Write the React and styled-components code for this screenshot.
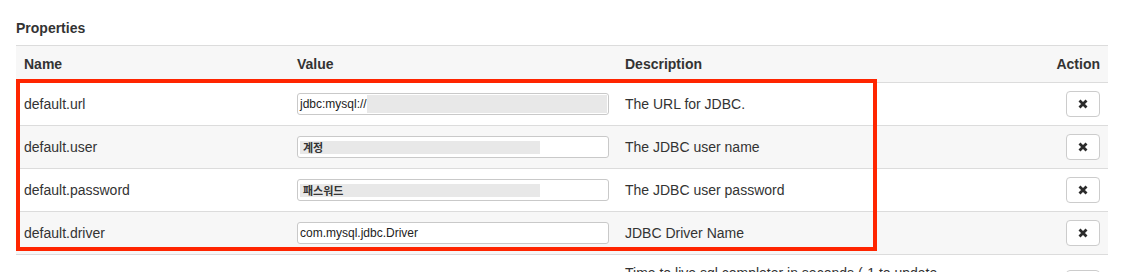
import React from 'react'
import styled, { createGlobalStyle } from 'styled-components'

const GlobalStyle = createGlobalStyle`
  html, body {
    margin: 0;
    padding: 0;
    background: #fff;
  }
  body {
    font-family: 'Liberation Sans', Arial, Helvetica, sans-serif;
    font-size: 14px;
    line-height: 20px;
    color: #333;
  }
`

const Page = styled.div`
  padding: 18px 16px 0;
  height: 272px;
  box-sizing: border-box;
  overflow: hidden;
`

const Title = styled.h4`
  margin: 0 0 7px;
  font-size: 14px;
  line-height: 20px;
  font-weight: bold;
`

const TableWrap = styled.div`
  position: relative;
`

const Table = styled.table`
  width: 100%;
  table-layout: fixed;
  border-collapse: collapse;
  border-spacing: 0;
`

const HeadCell = styled.th`
  padding: 8px;
  line-height: 20px;
  font-weight: bold;
  text-align: ${(p) => (p.$right ? 'right' : 'left')};
  background: #f7f7f7;
  border-top: 1px solid #dcdcdc;
`

const Row = styled.tr`
  background: ${(p) => (p.$striped ? '#f7f7f7' : '#fff')};
`

const Cell = styled.td`
  padding: 8px;
  line-height: 20px;
  vertical-align: middle;
  border-top: 1px solid #dcdcdc;
  text-align: ${(p) => (p.$right ? 'right' : 'left')};
`

const Field = styled.div`
  display: flex;
  align-items: center;
  height: 22px;
  box-sizing: border-box;
  border: 1px solid #c9c9c9;
  border-radius: 3px;
  background: #fff;
  padding: 0 1px 0 2px;
  font-size: 12px;
  line-height: 18px;
  color: #222;
  white-space: nowrap;
  overflow: hidden;
`

const Blur = styled.span`
  flex: 1;
  align-self: stretch;
  margin: 1px 0;
  background: #e8e8e8;
`

const Masked = styled.span`
  display: inline-block;
  width: 240px;
  height: 13px;
  padding-left: 3px;
  box-sizing: border-box;
  background: #e8e8e8;
  font-family: 'Noto Sans CJK KR', 'Liberation Sans', sans-serif;
  font-size: 11px;
  font-weight: bold;
  line-height: 13px;
  color: #333;
`

const Desc = styled.div`
  max-width: 360px;
`

const RemoveButton = styled.button`
  display: inline-flex;
  align-items: center;
  justify-content: center;
  width: 34px;
  height: 26px;
  padding: 0;
  vertical-align: middle;
  background: #fff;
  border: 1px solid #cccccc;
  border-radius: 4px;
  color: #333;
  cursor: pointer;
`

const Highlight = styled.div`
  position: absolute;
  left: 0;
  top: 34px;
  width: 861px;
  height: 172px;
  box-sizing: border-box;
  border: 4px solid #ff2500;
  pointer-events: none;
`

const TimesIcon = () => (
  <svg width="10" height="10" viewBox="0 0 10 10" aria-hidden="true">
    <path
      d="M1.5 1.5 L8.5 8.5 M8.5 1.5 L1.5 8.5"
      stroke="#2b2b2b"
      strokeWidth="2.8"
      strokeLinecap="butt"
    />
  </svg>
)

const properties = [
  { name: 'default.url', value: 'url', description: 'The URL for JDBC.' },
  { name: 'default.user', value: 'user', description: 'The JDBC user name' },
  { name: 'default.password', value: 'password', description: 'The JDBC user password' },
  { name: 'default.driver', value: 'driver', description: 'JDBC Driver Name' },
  {
    name: '',
    value: 'none',
    description:
      'Time to live sql completer in seconds (-1 to update everytime, 0 to disable update)',
  },
]

const renderValue = (kind) => {
  if (kind === 'url')
    return (
      <Field>
        jdbc:mysql://
        <Blur />
      </Field>
    )
  if (kind === 'user')
    return (
      <Field>
        <Masked>계정</Masked>
      </Field>
    )
  if (kind === 'password')
    return (
      <Field>
        <Masked>패스워드</Masked>
      </Field>
    )
  if (kind === 'driver') return <Field>com.mysql.jdbc.Driver</Field>
  return null
}

const App = () => (
  <>
    <GlobalStyle />
    <Page>
      <Title>Properties</Title>
      <TableWrap>
        <Table>
          <colgroup>
            <col style={{ width: 273 }} />
            <col style={{ width: 328 }} />
            <col style={{ width: 376 }} />
            <col />
          </colgroup>
          <thead>
            <tr>
              <HeadCell>Name</HeadCell>
              <HeadCell>Value</HeadCell>
              <HeadCell>Description</HeadCell>
              <HeadCell $right>Action</HeadCell>
            </tr>
          </thead>
          <tbody>
            {properties.map((p, i) => (
              <Row key={i} $striped={i % 2 === 1}>
                <Cell>{p.name}</Cell>
                <Cell>{renderValue(p.value)}</Cell>
                <Cell>
                  <Desc>{p.description}</Desc>
                </Cell>
                <Cell $right>
                  <RemoveButton type="button" aria-label="remove">
                    <TimesIcon />
                  </RemoveButton>
                </Cell>
              </Row>
            ))}
          </tbody>
        </Table>
        <Highlight />
      </TableWrap>
    </Page>
  </>
)

export default App
